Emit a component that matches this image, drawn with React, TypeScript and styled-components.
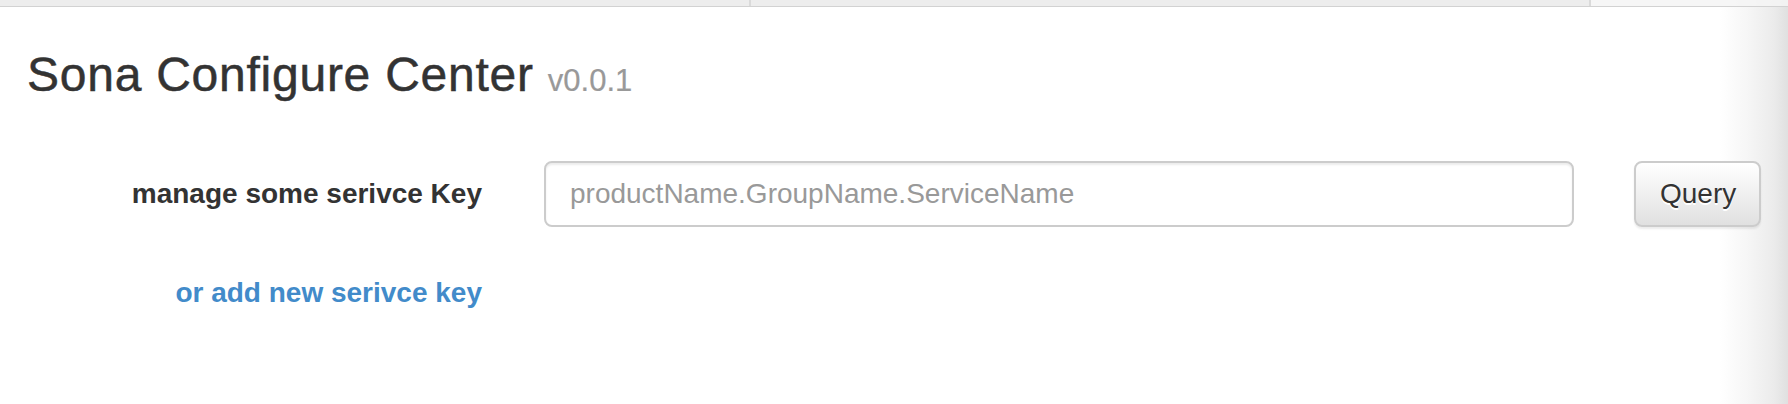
import React from 'react';
import styled, { createGlobalStyle } from 'styled-components';

const GlobalStyle = createGlobalStyle`
  html, body {
    margin: 0;
    padding: 0;
  }

  body {
    height: 404px;
    overflow: hidden;
    font-family: "Liberation Sans", Helvetica, Arial, sans-serif;
    color: #333;
    background: linear-gradient(
      to right,
      #ffffff 0,
      #ffffff calc(100% - 68px),
      #f6f6f6 calc(100% - 40px),
      #ebebeb calc(100% - 14px),
      #e0e0e0 100%
    );
  }
`;

const TabBar = styled.div`
  display: flex;
  height: 6px;
  border-bottom: 1px solid #d2d2d2;
`;

const Tab = styled.div<{ $width?: number; $active?: boolean }>`
  flex: ${(p) => (p.$width ? `0 0 ${p.$width}px` : '1 1 auto')};
  background: ${(p) => (p.$active ? 'rgba(245, 245, 245, 0.85)' : 'rgba(235, 235, 235, 0.9)')};
  border-right: 2px solid #dadada;

  &:last-child {
    border-right: none;
  }
`;

const Container = styled.div`
  display: flex;
  flex-direction: column;
  padding: 0 27px;
`;

const Heading = styled.h3`
  margin: 42px 0 0;
  font-size: 48px;
  font-weight: 400;
  line-height: 1.1;
  letter-spacing: 0.75px;
  -webkit-text-stroke: 0.5px #333;
  color: #333;
`;

const Version = styled.small`
  font-size: 31px;
  font-weight: 400;
  letter-spacing: 0;
  -webkit-text-stroke: 0.2px #999;
  color: #999;
`;

const FormRow = styled.div`
  display: flex;
  align-items: center;
  margin-top: 59px;
`;

const LabelCol = styled.div`
  flex: 0 0 455px;
  text-align: right;
  font-size: 28px;
  font-weight: 700;
  color: #333;
`;

const KeyInput = styled.input`
  box-sizing: border-box;
  width: 1031px;
  height: 66px;
  margin-left: 62px;
  padding: 0 24px;
  border: 2px solid #ccc;
  border-radius: 8px;
  box-shadow: inset 0 2px 2px rgba(0, 0, 0, 0.075);
  font-family: inherit;
  font-size: 28px;
  color: #555;
  background: #fff;
  outline: none;

  &::placeholder {
    color: #999;
  }
`;

const QueryButton = styled.button`
  box-sizing: border-box;
  width: 127px;
  height: 66px;
  margin-left: 60px;
  padding: 0 24px;
  border: 2px solid #ccc;
  border-radius: 8px;
  background: linear-gradient(to bottom, #fff 0, #e0e0e0 100%);
  box-shadow: inset 0 2px 0 rgba(255, 255, 255, 0.15), 0 2px 2px rgba(0, 0, 0, 0.075);
  font-family: inherit;
  font-size: 28px;
  color: #333;
  text-shadow: 0 2px 0 #fff;
  cursor: pointer;
`;

const LinkRow = styled.div`
  display: flex;
  margin-top: 50px;
`;

const AddLink = styled.a`
  flex: 0 0 455px;
  text-align: right;
  font-size: 28px;
  font-weight: 700;
  color: #428bca;
  text-decoration: none;
`;

export default function App() {
  return (
    <>
      <GlobalStyle />
      <TabBar>
        <Tab $width={749} />
        <Tab $width={838} />
        <Tab $active />
      </TabBar>
      <Container>
        <Heading>
          Sona Configure Center <Version>v0.0.1</Version>
        </Heading>
        <FormRow>
          <LabelCol>manage some serivce Key</LabelCol>
          <KeyInput placeholder="productName.GroupName.ServiceName" />
          <QueryButton>Query</QueryButton>
        </FormRow>
        <LinkRow>
          <AddLink href="#">or add new serivce key</AddLink>
        </LinkRow>
      </Container>
    </>
  );
}
